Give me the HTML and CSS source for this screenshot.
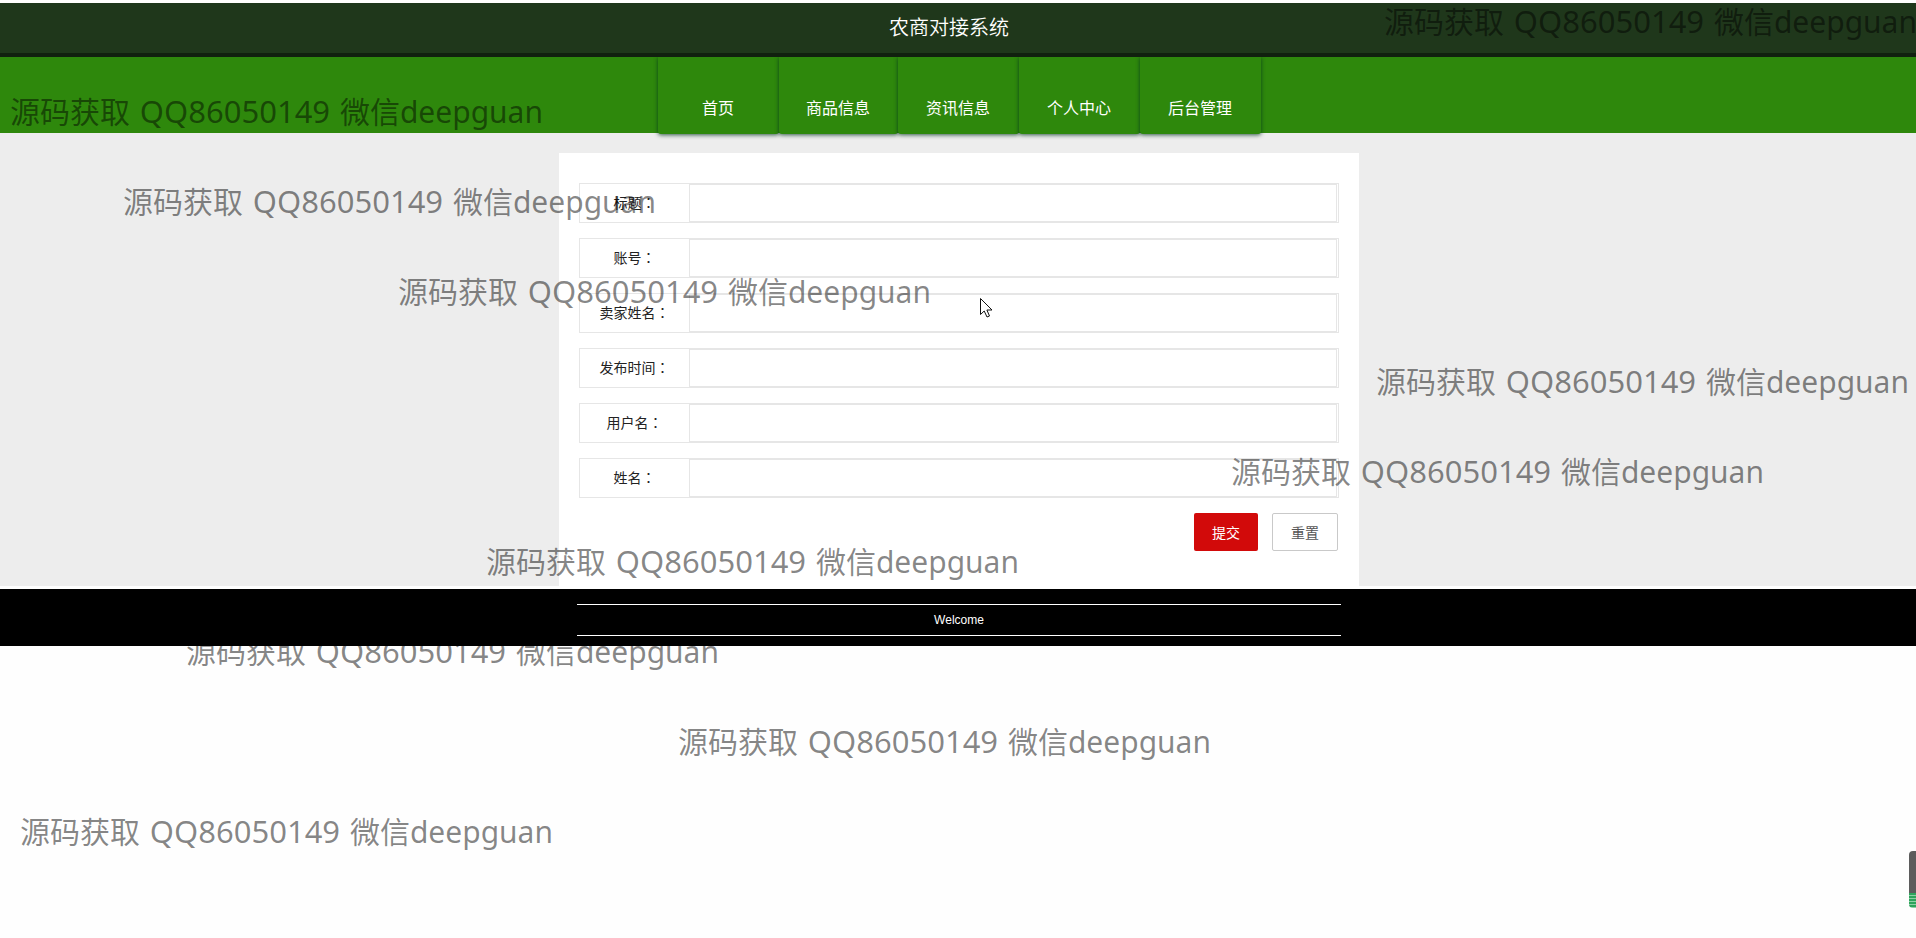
FILE: index.html
```html
<!DOCTYPE html>
<html lang="zh-CN">
<head>
<meta charset="utf-8">
<title>农商对接系统</title>
<link rel="stylesheet" href="styles.css">
</head>
<body>
<header class="header"><h1 class="title">农商对接系统</h1></header>
<nav class="nav">
  <ul class="menu">
    <li><a href="#">首页</a></li>
    <li><a href="#">商品信息</a></li>
    <li><a href="#">资讯信息</a></li>
    <li><a href="#">个人中心</a></li>
    <li><a href="#">后台管理</a></li>
  </ul>
</nav>
<main class="main">
  <form class="card">
    <div class="row"><label for="f1">标题<span class="colon" lang="zh-TW">：</span></label><input id="f1" type="text"></div>
    <div class="row"><label for="f2">账号<span class="colon" lang="zh-TW">：</span></label><input id="f2" type="text"></div>
    <div class="row"><label for="f3">卖家姓名<span class="colon" lang="zh-TW">：</span></label><input id="f3" type="text"></div>
    <div class="row"><label for="f4">发布时间<span class="colon" lang="zh-TW">：</span></label><input id="f4" type="text"></div>
    <div class="row"><label for="f5">用户名<span class="colon" lang="zh-TW">：</span></label><input id="f5" type="text"></div>
    <div class="row"><label for="f6">姓名<span class="colon" lang="zh-TW">：</span></label><input id="f6" type="text"></div>
    <div class="actions">
      <button class="btn btn-submit" type="submit">提交</button>
      <button class="btn btn-reset" type="reset">重置</button>
    </div>
  </form>
</main>
<footer class="footer"><p class="welcome">Welcome</p></footer>
<div class="marks" aria-hidden="true">
  <span class="mark m1">源码获取 <span class="num">QQ86050149</span> 微信deepguan</span>
  <span class="mark m2">源码获取 <span class="num">QQ86050149</span> 微信deepguan</span>
  <span class="mark m3">源码获取 <span class="num">QQ86050149</span> 微信deepguan</span>
  <span class="mark m4">源码获取 <span class="num">QQ86050149</span> 微信deepguan</span>
  <span class="mark m5">源码获取 <span class="num">QQ86050149</span> 微信deepguan</span>
  <span class="mark m6">源码获取 <span class="num">QQ86050149</span> 微信deepguan</span>
  <span class="mark m7">源码获取 <span class="num">QQ86050149</span> 微信deepguan</span>
  <span class="mark m8">源码获取 <span class="num">QQ86050149</span> 微信deepguan</span>
  <span class="mark m9">源码获取 <span class="num">QQ86050149</span> 微信deepguan</span>
  <span class="mark m10">源码获取 <span class="num">QQ86050149</span> 微信deepguan</span>
</div>
<svg class="cursor" width="14" height="20" viewBox="0 0 14 20" aria-hidden="true"><path d="M.5 .5V16.500L4.200 13L7 19L9.500 18L6.900 12H12Z" fill="#fff" stroke="#111" stroke-width="1"/></svg>
<div class="meter" aria-hidden="true"></div>
</body>
</html>
```
FILE: styles.css
```css
* { box-sizing: border-box; }
html { height: 100%; }
body {
  position: relative;
  min-height: 100%;
  margin: 0;
  padding-top: 3px;
  overflow: hidden;
  background: #fefefe;
  font-family: "Noto Sans", "Noto Sans CJK SC", sans-serif;
  font-size: 14px;
  color: #222;
}
.header {
  padding-right: 18px;
  background: #1f371b;
  border-bottom: 4px solid #11200f;
}
.title {
  margin: 0;
  color: #fff;
  font-size: 20px;
  font-weight: 350;
  line-height: 50px;
  text-align: center;
}
.nav {
  display: flex;
  justify-content: center;
  height: 76px;
  padding-left: 2px;
  background: #2e880c;
}
.menu {
  display: grid;
  grid-template-columns: 121px 119px repeat(3, 121px);
  height: 77px;
  margin: 0;
  padding: 0;
  list-style: none;
}
.menu a {
  display: block;
  height: 77px;
  padding-top: 39px;
  border-radius: 0 0 3px 3px;
  background: #2e880c;
  box-shadow: 0 1px 4px rgba(0, 50, 30, .8);
  clip-path: inset(0 -6px -6px -6px);
  color: #fff;
  font-size: 16px;
  line-height: 24px;
  text-align: center;
  text-decoration: none;
}
.main {
  padding: 20px 0 0 2px;
  background: linear-gradient(#ededed, #ededed) no-repeat 0 0 / 100% calc(100% - 3px);
}
.card {
  display: flex;
  flex-direction: column;
  gap: 15px;
  max-width: 800px;
  margin: 0 auto;
  padding: 30px 20px 38px;
  background: #fff;
}
.row {
  display: flex;
  height: 40px;
  border: 1px solid #e6e6e6;
}
.row label {
  width: 109px;
  line-height: 38px;
  text-align: center;
}
.colon { font-family: "Noto Sans CJK TC", sans-serif; line-height: 1; }
.row input {
  flex: 1;
  min-width: 0;
  margin-right: 1px;
  padding: 0 10px;
  border: 1px solid #e6e6e6;
  background: #fff;
  font: inherit;
  outline: 0;
}
.actions {
  display: flex;
  justify-content: flex-end;
  gap: 14px;
  padding-right: 1px;
}
.btn {
  height: 38px;
  padding: 0 18px;
  border: 0;
  border-radius: 2px;
  font: inherit;
}
.btn-submit { background: #d20a0a; color: #fff; }
.btn-reset { border: 1px solid #c9c9c9; background: #fff; color: #555; }
.footer {
  position: relative;
  z-index: 2;
  padding: 15px 0 10px 2px;
  background: #000;
}
.welcome {
  max-width: 764px;
  margin: 0 auto;
  border: solid #fff;
  border-width: 1px 0;
  color: #fff;
  font: 12px/30px "Liberation Sans", Arial, sans-serif;
  text-align: center;
}
.marks {
  position: absolute;
  inset: 0;
  z-index: 1;
  overflow: hidden;
  pointer-events: none;
}
.mark {
  position: absolute;
  color: rgba(0, 0, 0, .48);
  font-size: 30px;
  line-height: 40px;
  white-space: nowrap;
}
.num { margin: 0 2px; font-size: 31px; }
.m1 { left: 1384px; top: 1px; }
.m2 { left: 10px; top: 91px; }
.m3 { left: 123px; top: 181px; }
.m4 { left: 398px; top: 271px; }
.m5 { left: 1376px; top: 361px; }
.m6 { left: 1231px; top: 451px; }
.m7 { left: 486px; top: 541px; }
.m8 { left: 186px; top: 631px; }
.m9 { left: 678px; top: 721px; }
.m10 { left: 20px; top: 811px; }
.cursor {
  position: absolute;
  left: 980px;
  top: 298px;
  z-index: 3;
}
.meter {
  position: absolute;
  right: 0;
  top: 851px;
  z-index: 3;
  width: 7px;
  height: 57px;
  border-radius: 4px 0 0 4px;
  background:
    repeating-linear-gradient(#2fa35c 0 2px, #8fd0a6 2px 3px) no-repeat 0 100% / 100% 15px,
    #5c5c5c;
}
```
